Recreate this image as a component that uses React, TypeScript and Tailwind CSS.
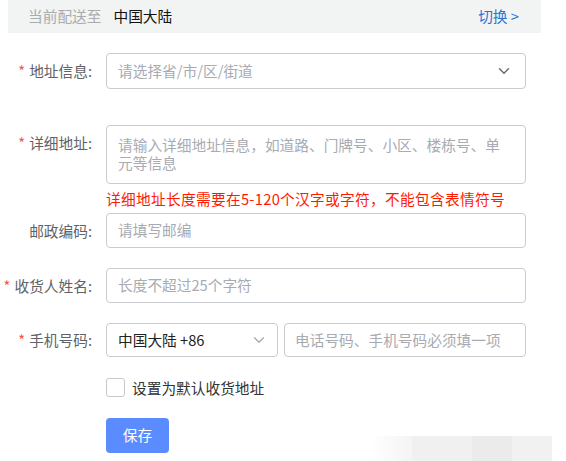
import { ChevronDown } from "lucide-react";

const font = { fontFamily: '"Microsoft YaHei", "Noto Sans CJK SC", "Noto Sans", sans-serif' };

const Label = ({ text, required, h }: { text: string; required?: boolean; h: string }) => (
  <div className={`w-[92px] shrink-0 text-right text-[14.7px] text-[#5f6266] whitespace-nowrap ${h}`}>
    {required && <span className="text-[#f5533d] mr-[4px]">*</span>}
    {text}
  </div>
);

const App = () => {
  return (
    <div className="relative w-[566px] h-[461px] bg-white overflow-hidden" style={font}>
      {/* Delivery region bar */}
      <div className="ml-2 w-[533px] h-[33px] bg-[#f2f3f3] flex items-center pl-[20px] pr-[22px] text-[14.7px]">
        <span className="text-[#a9abad]">当前配送至</span>
        <span className="ml-[12px] text-[#111]">中国大陆</span>
        <span className="ml-auto text-[#2b73d3]">切换 &gt;</span>
      </div>

      {/* Address */}
      <div className="flex mt-[20px]">
        <Label text="地址信息:" required h="h-[36px] leading-[36px]" />
        <div className="ml-[14px] w-[420px] h-[36px] border border-[#cacbd0] rounded-[4px] flex items-center pl-[11px] pr-[12px]">
          <span className="text-[14.7px] text-[#a8abb2]">请选择省/市/区/街道</span>
          <ChevronDown className="ml-auto w-[18px] h-[18px] text-[#6b6d70]" strokeWidth={2} />
        </div>
      </div>

      {/* Detail */}
      <div className="flex mt-[36px]">
        <Label text="详细地址:" required h="h-[36px] leading-[36px]" />
        <div className="ml-[14px] w-[420px] h-[59px] border border-[#cacbd0] rounded-[4px] pl-[11px] pr-[13px] pt-[10px] text-[14.7px] leading-[18px] text-[#a8abb2]">
          请输入详细地址信息，如道路、门牌号、小区、楼栋号、单元等信息
        </div>
      </div>
      <div className="ml-[106px] mt-[4px] h-[22px] leading-[22px] text-[14.7px] tracking-[0.3px] text-[#ff1a00] whitespace-nowrap">
        详细地址长度需要在5-120个汉字或字符，不能包含表情符号
      </div>

      {/* Postal code */}
      <div className="flex mt-[3px]">
        <Label text="邮政编码:" h="h-[35px] leading-[35px]" />
        <div className="ml-[14px] w-[420px] h-[35px] border border-[#cacbd0] rounded-[4px] flex items-center pl-[11px] text-[14.7px] text-[#a8abb2]">
          请填写邮编
        </div>
      </div>

      {/* Receiver */}
      <div className="flex mt-[20px]">
        <Label text="收货人姓名:" required h="h-[35px] leading-[35px]" />
        <div className="ml-[14px] w-[420px] h-[35px] border border-[#cacbd0] rounded-[4px] flex items-center pl-[11px] text-[14.7px] text-[#a8abb2]">
          长度不超过25个字符
        </div>
      </div>

      {/* Phone */}
      <div className="flex mt-[20px]">
        <Label text="手机号码:" required h="h-[34px] leading-[34px]" />
        <div className="ml-[14px] w-[420px] h-[34px] flex gap-[6px]">
          <div className="w-[172px] h-full border border-[#cacbd0] rounded-[4px] flex items-center pl-[11px] pr-[9px] text-[14.7px] text-[#222]">
            中国大陆 +86
            <ChevronDown className="ml-auto w-[18px] h-[18px] text-[#a0a3a8]" strokeWidth={1.5} />
          </div>
          <div className="flex-1 h-full border border-[#cacbd0] rounded-[4px] flex items-center pl-[10px] text-[14.7px] text-[#a8abb2] whitespace-nowrap">
            电话号码、手机号码必须填一项
          </div>
        </div>
      </div>

      {/* Default checkbox */}
      <div className="flex items-center h-[19px] mt-[21px] ml-[106px]">
        <div className="w-[19px] h-[19px] border border-[#c8c9cc] rounded-[3px]" />
        <span className="ml-[7px] text-[14.7px] leading-[19px] text-[#333]">设置为默认收货地址</span>
      </div>

      {/* Save */}
      <button className="mt-[21px] ml-[106px] w-[63px] h-[35px] rounded-[4px] bg-[#5b8cff] text-white text-[14.7px] flex items-center justify-center">
        保存
      </button>

      {/* Blurred watermark */}
      <div className="absolute left-[372px] top-[436px] flex opacity-70">
        <div className="w-[40px] h-[25px] bg-gradient-to-r from-white to-[#f0f0f0]" />
        <div className="w-[60px] h-[25px] bg-[#ebebeb]" />
        <div className="w-[40px] h-[25px] bg-[#e3e3e3]" />
        <div className="w-[40px] h-[25px] bg-[#ececec]" />
      </div>
    </div>
  );
};

export default App;
